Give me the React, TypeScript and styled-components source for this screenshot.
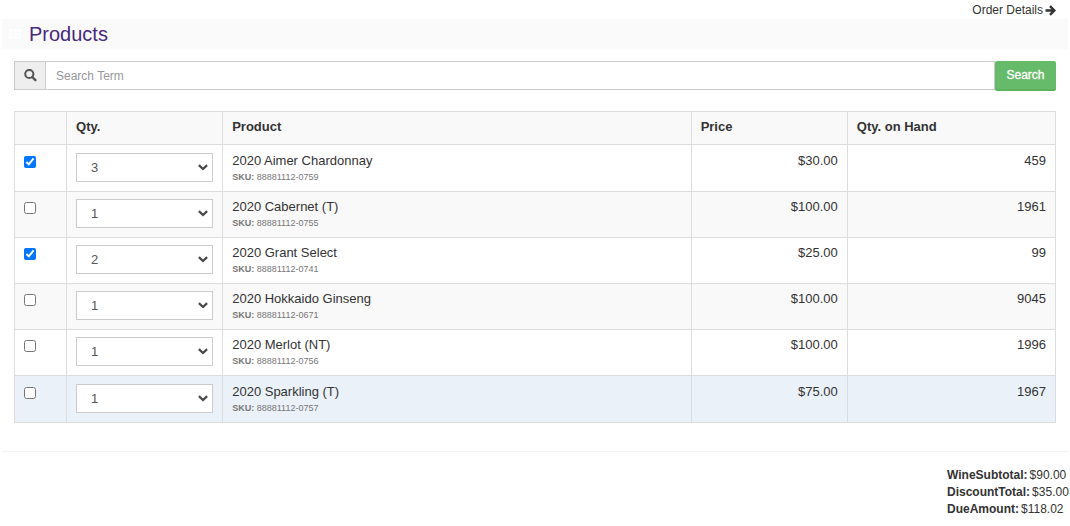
import React, { useState } from "react";
import styled, { createGlobalStyle } from "styled-components";

const GlobalStyle = createGlobalStyle`
  *, *::before, *::after { box-sizing: border-box; }
  body {
    margin: 0;
    background: #fff;
    color: #333;
    font-family: "Liberation Sans", Arial, sans-serif;
    font-size: 12px;
    line-height: 17px;
  }
`;

const TopBar = styled.nav`
  display: flex;
  justify-content: flex-end;
  padding: 2px 14px 0;
`;

const DetailsLink = styled.a`
  display: inline-flex;
  align-items: center;
  gap: 2px;
  color: #333;
  text-decoration: none;
`;

const Panel = styled.section`
  margin: 0 2px;
  border-bottom: 1px solid #f3f3f3;
`;

const PanelHeader = styled.header`
  display: flex;
  align-items: center;
  gap: 8px;
  height: 30px;
  padding: 0 7px;
  background: #fafafa;
`;

const Title = styled.h1`
  margin: 0;
  color: #482980;
  font-size: 20px;
  line-height: 30px;
  font-weight: 400;
`;

const PanelBody = styled.div`
  padding: 12px 12px 28px;
`;

const SearchForm = styled.form`
  display: flex;
  align-items: flex-start;
  margin-bottom: 20px;
`;

const SearchLabel = styled.label`
  display: flex;
  align-items: center;
  justify-content: center;
  width: 31px;
  height: 29px;
  border: 1px solid #ccc;
  border-right: 0;
  background: #eee;
  color: #555;
`;

const SearchInput = styled.input`
  flex: 1;
  min-width: 0;
  height: 29px;
  padding: 0 10px;
  border: 1px solid #ccc;
  border-radius: 0;
  color: #555;
  font: inherit;
  &::placeholder { color: #999; opacity: 1; }
`;

const SearchButton = styled.button`
  width: 61px;
  height: 30px;
  padding: 0;
  border: 0;
  border-bottom: 2px solid #5cb360;
  border-radius: 2px;
  background: #66bb6a;
  color: #fff;
  font: inherit;
  -webkit-text-stroke: 0.3px #fff;
`;

const Table = styled.table`
  width: 100%;
  table-layout: fixed;
  border-collapse: collapse;
  font-size: 13px;
`;

const Column = styled.col<{ $share: number }>`
  width: ${(p) => p.$share}%;
`;

const HeadCell = styled.th`
  height: 33px;
  padding: 0 9px 4px;
  border: 1px solid #ddd;
  background: #f9f9f9;
  text-align: left;
  font-weight: 700;
`;

const Cell = styled.td<{ $numeric?: boolean }>`
  height: 46px;
  padding: 6px 9px 0;
  border: 1px solid #ddd;
  vertical-align: top;
  text-align: ${(p) => (p.$numeric ? "right" : "left")};
`;

const Row = styled.tr<{ $active?: boolean }>`
  background: ${(p) => (p.$active ? "#eaf1f8" : "#fff")};
  &:nth-child(even) { background: ${(p) => (p.$active ? "#eaf1f8" : "#f9f9f9")}; }
  &:first-child ${Cell}, &:last-child ${Cell} { height: 47px; padding-top: 7px; }
`;

const Check = styled.input`
  display: block;
  width: 12px;
  height: 12px;
  margin: 4px 0 0;
`;

const SelectBox = styled.div`
  display: grid;
  align-items: center;
  margin-top: 1px;
  & > * { grid-area: 1 / 1; }
  svg { justify-self: end; margin-right: 5px; pointer-events: none; }
`;

const QtySelect = styled.select`
  width: 100%;
  height: 29px;
  padding: 0 14px;
  appearance: none;
  border: 1px solid #ccc;
  border-radius: 0;
  background: #fff;
  color: #555;
  font: inherit;
`;

const ProductName = styled.div`
  font-size: 13px;
  line-height: 17px;
`;

const Sku = styled.div`
  color: #777;
  font-size: 9px;
  line-height: 16px;
`;

const Totals = styled.dl`
  width: 123px;
  margin: 15px 0 0 auto;
  white-space: nowrap;
`;

const Total = styled.div`
  display: flex;
  gap: 2px;
  dt { font-weight: 700; }
  dd { margin: 0; }
`;

const ArrowIcon = () => (
  <svg width="11" height="11" viewBox="0 0 11 11" aria-hidden="true">
    <path d="M0.5 5.5H9M5 1.2 9.3 5.5 5 9.8" fill="none" stroke="currentColor" strokeWidth="2.4" />
  </svg>
);

const GridIcon = () => (
  <svg width="12" height="10" viewBox="0 0 12 10" aria-hidden="true">
    <path d="M0 0h12v10H0z" fill="#fff" />
    <path d="M1 3.5h10M1 6.5h10M4 1v8M8 1v8" stroke="#fafafa" />
  </svg>
);

const SearchIcon = () => (
  <svg width="13" height="13" viewBox="0 0 13 13" aria-hidden="true">
    <circle cx="5.3" cy="5" r="4.1" fill="none" stroke="currentColor" strokeWidth="2" />
    <path d="m8.3 8 3.1 3.1" stroke="currentColor" strokeWidth="2.4" strokeLinecap="round" />
  </svg>
);

const ChevronIcon = () => (
  <svg width="10" height="7" viewBox="0 0 10 7" aria-hidden="true">
    <path d="M0.9 1.1 5 5 9.1 1.1" fill="none" stroke="#484848" strokeWidth="2.2" />
  </svg>
);

const columns = [
  { label: "", share: 5 },
  { label: "Qty.", share: 15 },
  { label: "Product", share: 45 },
  { label: "Price", share: 15 },
  { label: "Qty. on Hand", share: 20 },
];

const products = [
  { name: "2020 Aimer Chardonnay", sku: "88881112-0759", price: "$30.00", onHand: 459, qty: 3, picked: true },
  { name: "2020 Cabernet (T)", sku: "88881112-0755", price: "$100.00", onHand: 1961, qty: 1, picked: false },
  { name: "2020 Grant Select", sku: "88881112-0741", price: "$25.00", onHand: 99, qty: 2, picked: true },
  { name: "2020 Hokkaido Ginseng", sku: "88881112-0671", price: "$100.00", onHand: 9045, qty: 1, picked: false },
  { name: "2020 Merlot (NT)", sku: "88881112-0756", price: "$100.00", onHand: 1996, qty: 1, picked: false },
  { name: "2020 Sparkling (T)", sku: "88881112-0757", price: "$75.00", onHand: 1967, qty: 1, picked: false },
];

const totals = [
  ["WineSubtotal:", "$90.00"],
  ["DiscountTotal:", "$35.00"],
  ["DueAmount:", "$118.02"],
];

export default function App() {
  const [term, setTerm] = useState("");
  return (
    <>
      <GlobalStyle />
      <TopBar>
        <DetailsLink href="#order-details">Order Details <ArrowIcon /></DetailsLink>
      </TopBar>
      <Panel>
        <PanelHeader>
          <GridIcon />
          <Title>Products</Title>
        </PanelHeader>
        <PanelBody>
          <SearchForm onSubmit={(e) => e.preventDefault()}>
            <SearchLabel htmlFor="term" aria-label="Search term"><SearchIcon /></SearchLabel>
            <SearchInput id="term" placeholder="Search Term" value={term} onChange={(e) => setTerm(e.target.value)} />
            <SearchButton type="submit">Search</SearchButton>
          </SearchForm>
          <Table>
            <colgroup>
              {columns.map((c) => <Column key={c.label} $share={c.share} />)}
            </colgroup>
            <thead>
              <tr>{columns.map((c) => <HeadCell key={c.label} scope="col">{c.label}</HeadCell>)}</tr>
            </thead>
            <tbody>
              {products.map((p, i) => (
                <Row key={p.sku} $active={i === products.length - 1}>
                  <Cell><Check type="checkbox" defaultChecked={p.picked} aria-label={`Select ${p.name}`} /></Cell>
                  <Cell>
                    <SelectBox>
                      <QtySelect defaultValue={p.qty} aria-label={`Quantity of ${p.name}`}>
                        {[1, 2, 3].map((n) => <option key={n} value={n}>{n}</option>)}
                      </QtySelect>
                      <ChevronIcon />
                    </SelectBox>
                  </Cell>
                  <Cell>
                    <ProductName>{p.name}</ProductName>
                    <Sku><b>SKU:</b> {p.sku}</Sku>
                  </Cell>
                  <Cell $numeric>{p.price}</Cell>
                  <Cell $numeric>{p.onHand}</Cell>
                </Row>
              ))}
            </tbody>
          </Table>
        </PanelBody>
      </Panel>
      <Totals>
        {totals.map(([label, value]) => (
          <Total key={label}><dt>{label}</dt><dd>{value}</dd></Total>
        ))}
      </Totals>
    </>
  );
}
